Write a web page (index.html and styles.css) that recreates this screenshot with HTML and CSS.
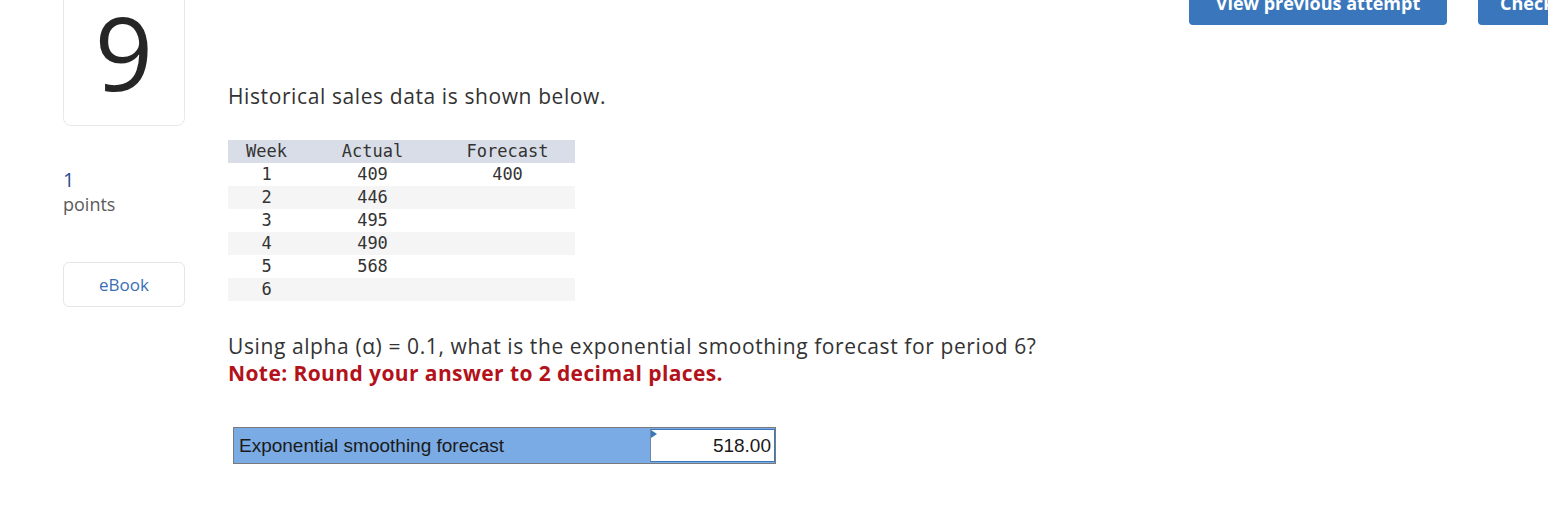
FILE: index.html
```html
<!DOCTYPE html>
<html lang="en">
<head>
<meta charset="utf-8">
<title>Question 9</title>
<link rel="stylesheet" href="styles.css">
</head>
<body>
<div class="page">
  <aside class="side">
    <div class="qnum">9</div>
    <div class="points">
      <div class="points-val">1</div>
      <div class="points-label">points</div>
    </div>
    <div class="ebook">eBook</div>
  </aside>
  <main class="main">
    <p class="intro">Historical sales data is shown below.</p>
    <table class="data">
      <thead>
        <tr><th class="c1">Week</th><th class="c2">Actual</th><th class="c3">Forecast</th></tr>
      </thead>
      <tbody>
        <tr><td>1</td><td>409</td><td>400</td></tr>
        <tr><td>2</td><td>446</td><td></td></tr>
        <tr><td>3</td><td>495</td><td></td></tr>
        <tr><td>4</td><td>490</td><td></td></tr>
        <tr><td>5</td><td>568</td><td></td></tr>
        <tr><td>6</td><td></td><td></td></tr>
      </tbody>
    </table>
    <p class="question">Using alpha (α) = 0.1, what is the exponential smoothing forecast for period 6?<br><strong class="note">Note: Round your answer to 2 decimal places.</strong></p>
    <div class="answer">
      <div class="answer-label">Exponential smoothing forecast</div>
      <div class="answer-input"><span class="flag"></span><span class="answer-val">518.00</span></div>
    </div>
  </main>
  <div class="actions">
    <div class="btn btn-prev">View previous attempt</div>
    <div class="btn btn-check">Check my work</div>
  </div>
</div>
</body>
</html>
```

FILE: styles.css
```css
html, body {
  margin: 0;
  padding: 0;
  background: #fff;
  overflow: hidden;
}
body {
  font-family: "Open Sans", Lato, sans-serif;
  color: #333;
}
.page {
  display: flex;
  align-items: flex-start;
  margin-top: -15px;
  width: 1548px;
  overflow: hidden;
}
.side {
  flex: 0 0 122px;
  margin-left: 63px;
}
.qnum {
  box-sizing: border-box;
  height: 141px;
  border: 1px solid #e8e8e8;
  border-radius: 8px;
  display: flex;
  justify-content: center;
  align-items: flex-start;
  font-size: 102px;
  line-height: 1;
  padding-top: 15px;
  color: #262626;
  font-weight: 400;
}
.points {
  margin-top: 42px;
}
.points-val {
  color: #1f4f8f;
  font-size: 20px;
  line-height: 24px;
}
.points-label {
  color: #5a5a5a;
  font-size: 18px;
  line-height: 23px;
  margin-top: 1px;
}
.ebook {
  box-sizing: border-box;
  margin-top: 46px;
  height: 45px;
  border: 1px solid #e6e6e6;
  border-radius: 6px;
  display: flex;
  align-items: center;
  justify-content: center;
  color: #3a6eb5;
  font-size: 17px;
}
.main {
  flex: 0 0 911px;
  margin-left: 43px;
}
.intro {
  margin: 99px 0 0;
  font-size: 21px;
  letter-spacing: 0.6px;
  line-height: 25px;
  color: #333;
}
.data {
  margin-top: 31px;
  border-collapse: collapse;
  font-family: "DejaVu Sans Mono", "Liberation Mono", monospace;
  font-size: 17px;
  color: #333;
}
.data th, .data td {
  padding: 0;
  height: 23px;
  line-height: 23px;
  text-align: center;
  font-weight: normal;
}
.data .c1 { width: 77px; }
.data .c2 { width: 135px; }
.data .c3 { width: 135px; }
.data thead tr { background: #d9dde7; }
.data tbody tr:nth-child(even) { background: #f5f5f5; }
.question {
  margin: 32px 0 0;
  font-size: 21px;
  letter-spacing: 0.6px;
  line-height: 27px;
  color: #333;
}
.note {
  color: #b3121a;
  font-weight: 700;
  letter-spacing: 0.4px;
}
.answer {
  display: flex;
  margin: 40px 0 0 5px;
  width: 543px;
  height: 37px;
  box-sizing: border-box;
  border: 1px solid #7a7a7a;
  background: #7aabe4;
}
.answer-label {
  flex: 1 1 auto;
  font-family: "Liberation Sans", Arial, sans-serif;
  font-size: 19px;
  color: #1a1a1a;
  line-height: 35px;
  padding-left: 5px;
}
.answer-input {
  position: relative;
  flex: 0 0 125px;
  box-sizing: border-box;
  margin: 1px 0 1px 0;
  border: 1px solid #3b78bb;
  border-left: 1px solid #6f88a6;
  background: #fff;
  text-align: right;
  font-family: "Liberation Sans", Arial, sans-serif;
  font-size: 19px;
  color: #1a1a1a;
  line-height: 31px;
  padding-right: 3px;
}
.flag {
  position: absolute;
  left: 0;
  top: 0;
  width: 0;
  height: 0;
  border-left: 6px solid #3b78bb;
  border-top: 4px solid transparent;
  border-bottom: 4px solid transparent;
}
.actions {
  flex: 0 0 auto;
  display: flex;
  gap: 31px;
  margin-left: 50px;
}
.btn {
  box-sizing: border-box;
  height: 40px;
  background: #3a76bb;
  color: #fff;
  border-radius: 4px;
  font-weight: 700;
  font-size: 18px;
  line-height: 36px;
  text-align: center;
  white-space: nowrap;
  overflow: hidden;
}
.btn-prev { width: 258px; flex: 0 0 258px; }
.btn-check {
  flex: 0 0 170px;
  text-align: left;
  padding-left: 22px;
}
```
